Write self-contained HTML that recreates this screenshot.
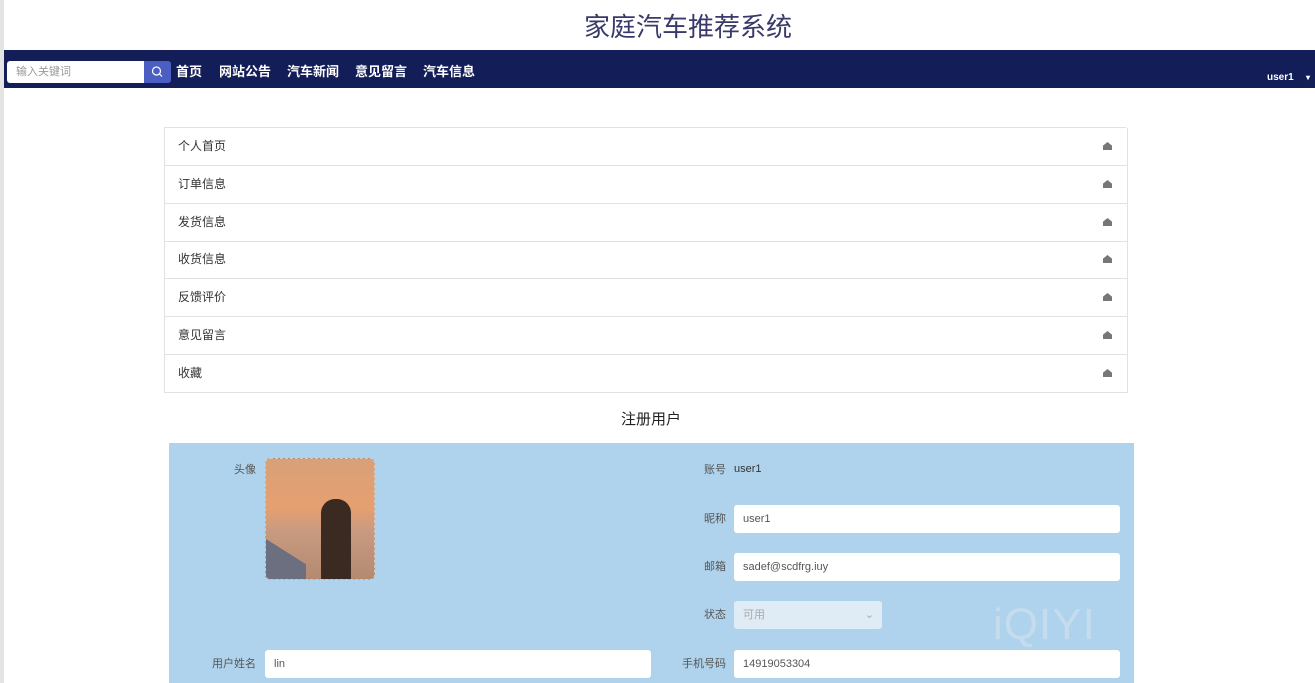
<!DOCTYPE html><html><head><meta charset="utf-8"><style>
body{margin:0;width:1315px;height:683px;overflow:hidden;background:#fff;font-family:"Liberation Sans","Noto Sans CJK SC",sans-serif;position:relative}
.a{position:absolute}
.title{left:0;width:1376px;top:7px;text-align:center;font-size:26px;color:#3a3a6a}
.nav{left:4px;right:0;top:50px;height:38px;background:#131d57}
.nav span{position:absolute;top:13px;color:#fff;font-weight:bold;font-size:13px;line-height:16px}
.row{left:164px;width:962px;height:37px;border:1px solid #e2e2e2;border-top:none;font-size:12px;color:#333;line-height:36px;box-sizing:content-box}
.row i{position:absolute;right:15px;top:14px;width:9px;height:8px;background:#777;clip-path:polygon(50% 0,100% 45%,100% 100%,0 100%,0 45%)}
.lbl{font-size:11px;color:#555;text-align:right;width:90px;line-height:14px}
.in{background:#fff;border-radius:3px;height:28px;font-size:11px;color:#555;line-height:28px;padding-left:9px;box-sizing:border-box}
</style></head><body>
<div class="a" style="left:0;top:0;width:4px;height:683px;background:#e4e4e4"></div>
<div class="a title">家庭汽车推荐系统</div>
<div class="a nav">
<div class="a" style="left:3px;top:11px;width:141px;height:22px;background:#fff;border-radius:3px 0 0 3px;font-size:11px;color:#999;line-height:22px;padding-left:9px;box-sizing:border-box">输入关键词</div>
<div class="a" style="left:140px;top:11px;width:27px;height:22px;background:#4a5fc1;border-radius:0 3px 3px 0"><svg width="27" height="22"><circle cx="12.5" cy="10" r="4" stroke="#fff" fill="none" stroke-width="1.2"/><line x1="15.5" y1="13" x2="18" y2="15.5" stroke="#fff" stroke-width="1.2"/></svg></div>
<span style="left:172px;top:14px">首页</span><span style="left:215px;top:14px">网站公告</span><span style="left:283px;top:14px">汽车新闻</span><span style="left:351px;top:14px">意见留言</span><span style="left:419px;top:14px">汽车信息</span>
<span style="left:1263px;top:20px;font-size:10px">user1</span><span style="left:1302px;top:20px;font-size:8px">▾</span>
</div>
<div class="a" style="left:164px;top:127px;width:962px;border-top:1px solid #e2e2e2"></div>
<div class="a row" style="top:128px"><span style="padding-left:13px">个人首页</span><i></i></div>
<div class="a row" style="top:166px"><span style="padding-left:13px">订单信息</span><i></i></div>
<div class="a row" style="top:204px"><span style="padding-left:13px">发货信息</span><i></i></div>
<div class="a row" style="top:241px"><span style="padding-left:13px">收货信息</span><i></i></div>
<div class="a row" style="top:279px"><span style="padding-left:13px">反馈评价</span><i></i></div>
<div class="a row" style="top:317px"><span style="padding-left:13px">意见留言</span><i></i></div>
<div class="a row" style="top:355px"><span style="padding-left:13px">收藏</span><i></i></div>
<div class="a" style="left:0;width:1302px;top:408px;text-align:center;font-size:15px;color:#222">注册用户</div>
<div class="a" style="left:169px;top:443px;width:965px;height:240px;background:#afd3ec"></div>
<div class="a lbl" style="left:166px;top:463px">头像</div>
<div class="a" style="left:265px;top:458px;width:110px;height:122px;border:1px dashed #ccc;box-sizing:border-box;border-radius:5px;background:linear-gradient(180deg,#d9a078 0%,#e6a070 40%,#c99a80 60%,#b38a70 100%);overflow:hidden"><div class="a" style="left:55px;top:40px;width:30px;height:82px;background:#3a2a22;border-radius:14px 14px 0 0"></div><div class="a" style="left:0;top:80px;width:40px;height:42px;background:#6b6f80;clip-path:polygon(0 0,100% 60%,100% 100%,0 100%)"></div></div>
<div class="a lbl" style="left:636px;top:463px">账号</div><div class="a" style="left:734px;top:463px;font-size:11px;color:#333">user1</div>
<div class="a lbl" style="left:636px;top:512px">昵称</div><div class="a in" style="left:734px;top:505px;width:386px">user1</div>
<div class="a lbl" style="left:636px;top:560px">邮箱</div><div class="a in" style="left:734px;top:553px;width:386px">sadef@scdfrg.iuy</div>
<div class="a lbl" style="left:636px;top:608px">状态</div><div class="a in" style="left:734px;top:601px;width:148px;background:#dfebf5;color:#aaa">可用<span style="position:absolute;right:8px;color:#aaa">⌄</span></div>
<div class="a" style="left:993px;top:600px;font-size:44px;color:#c4dced;letter-spacing:1px">iQIYI</div>
<div class="a lbl" style="left:166px;top:657px">用户姓名</div><div class="a in" style="left:265px;top:650px;width:386px">lin</div>
<div class="a lbl" style="left:636px;top:657px">手机号码</div><div class="a in" style="left:734px;top:650px;width:386px">14919053304</div>
</body></html>
